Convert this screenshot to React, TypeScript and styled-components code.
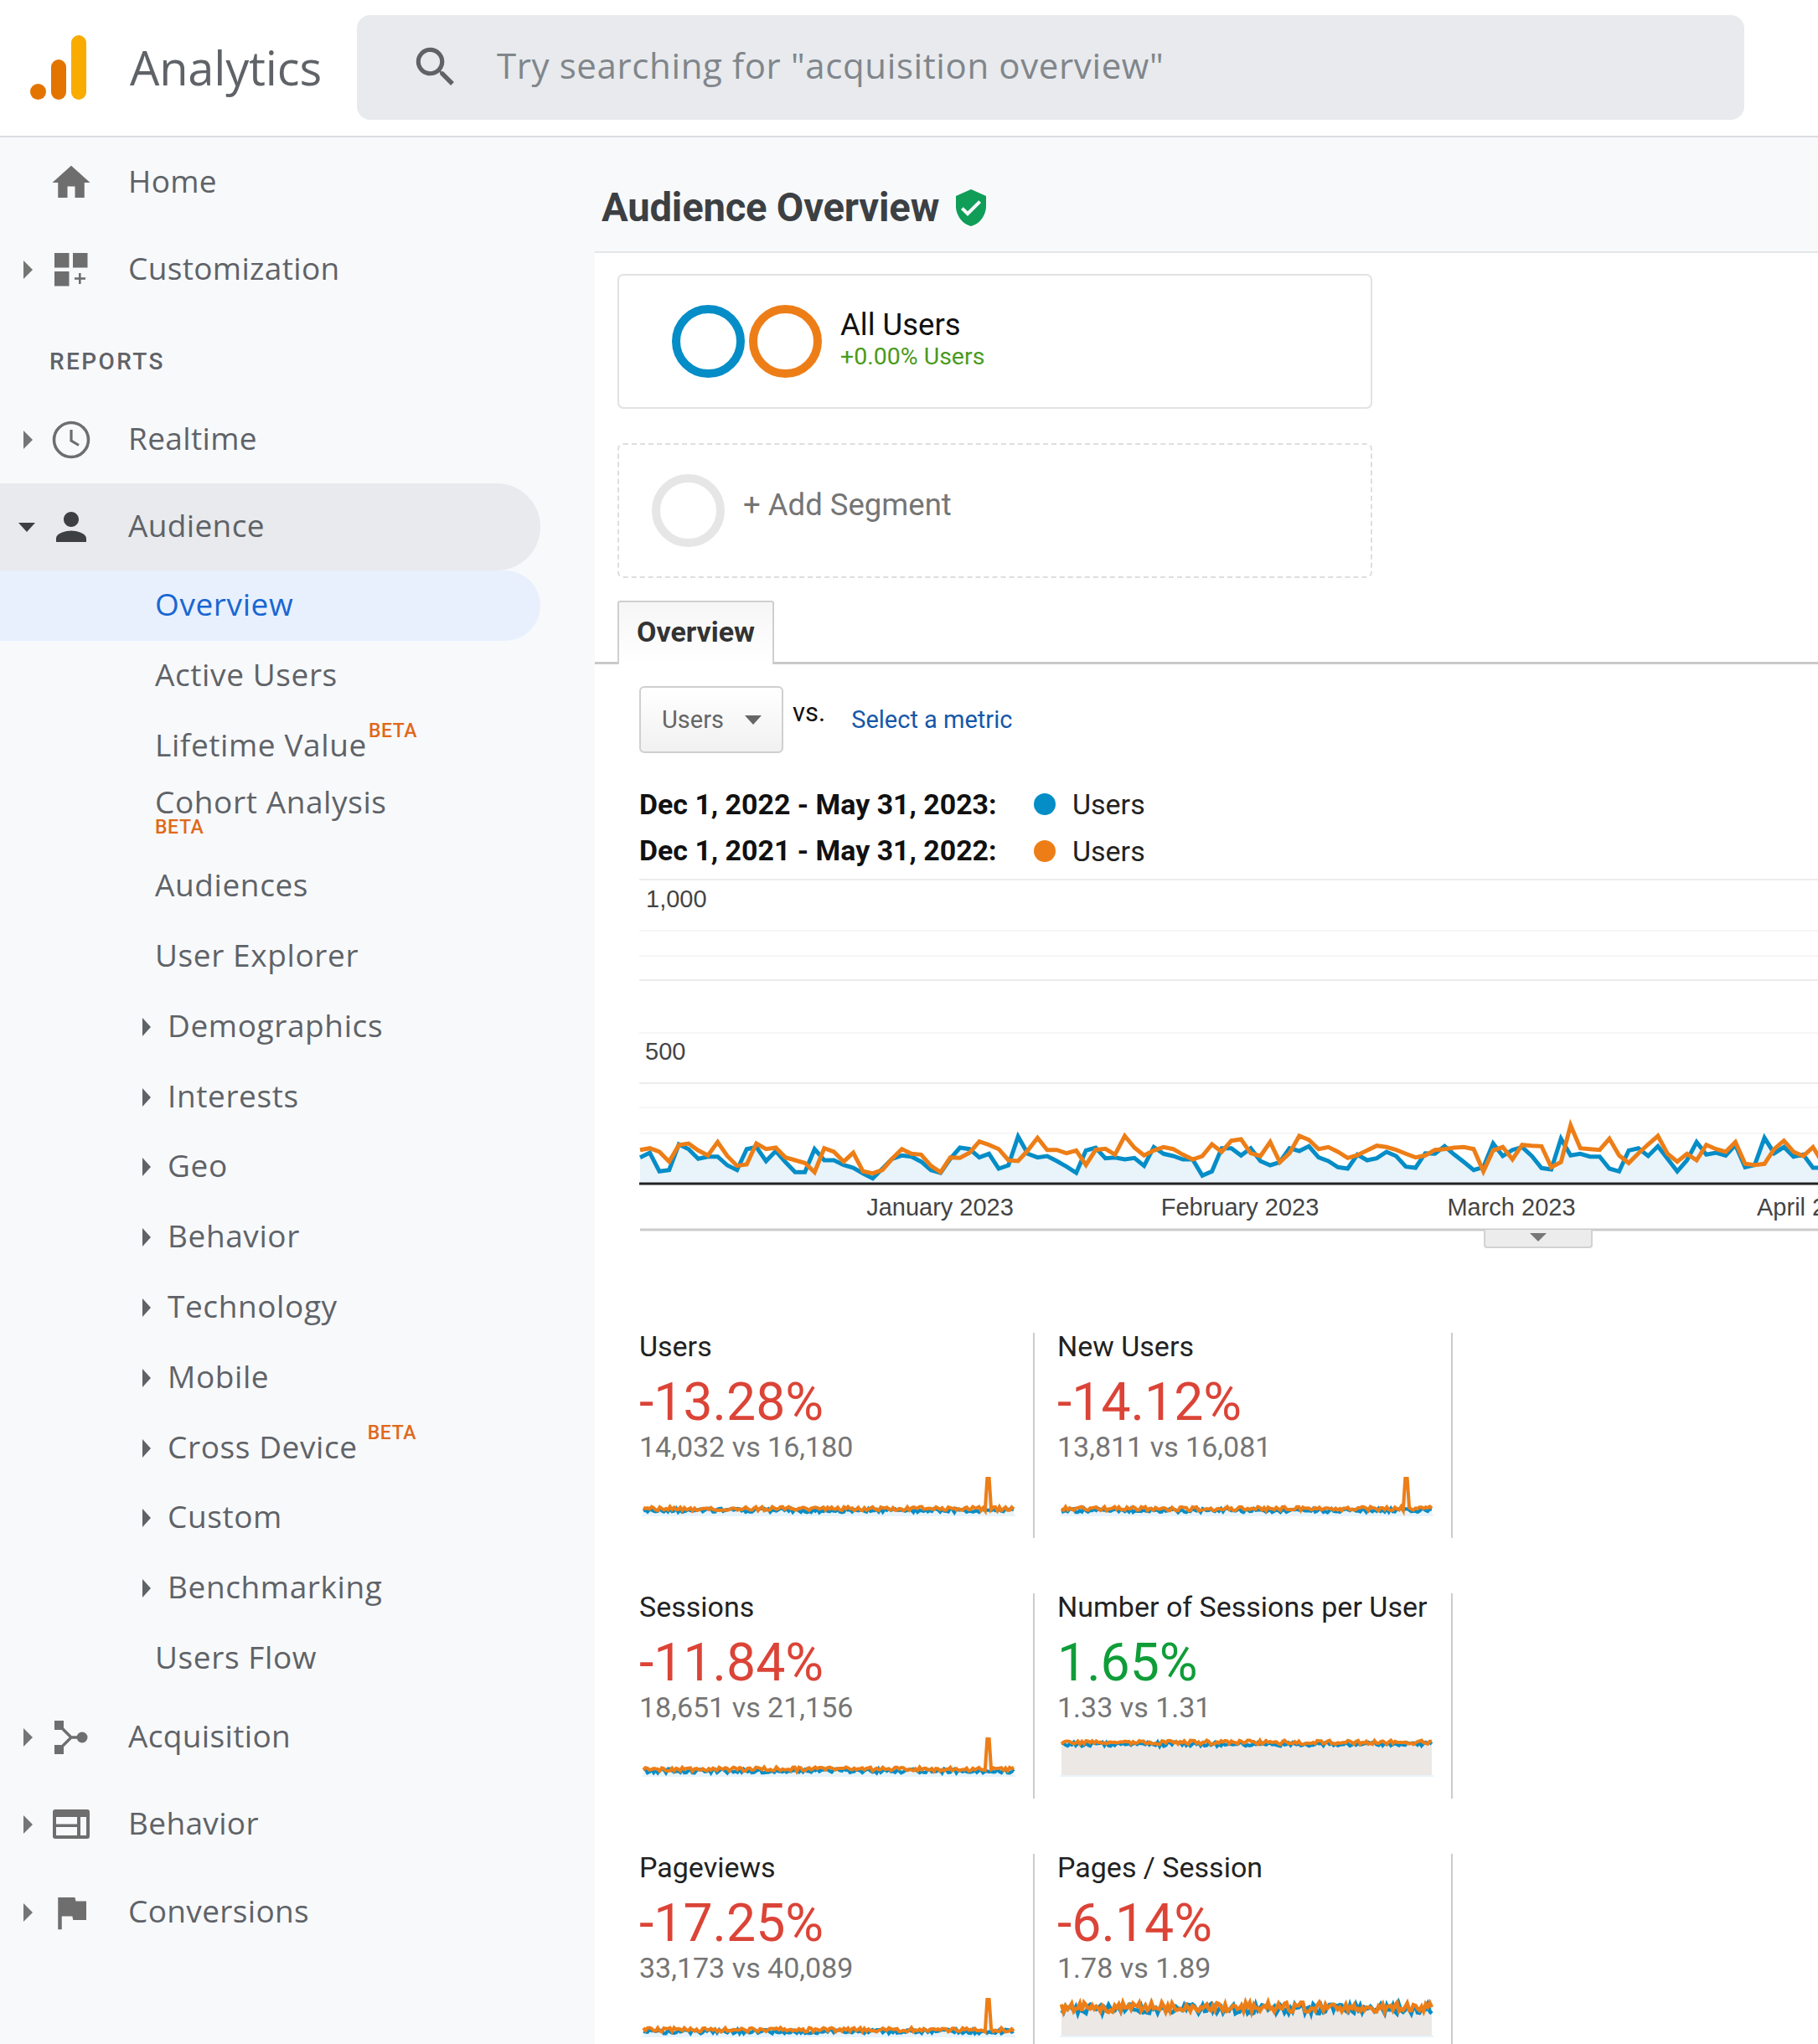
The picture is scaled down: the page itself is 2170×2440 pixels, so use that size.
import React from 'react';
import styled, { createGlobalStyle } from 'styled-components';

const NAV_FONT = '"Open Sans", "Noto Sans", sans-serif';
const BODY_FONT = 'Roboto, "Liberation Sans", sans-serif';

const GlobalStyle = createGlobalStyle`
  html, body {
    margin: 0;
    padding: 0;
    background: #fff;
  }
  * {
    box-sizing: border-box;
  }
`;

const Page = styled.div`
  width: 2170px;
  height: 2440px;
  overflow: hidden;
  display: flex;
  flex-direction: column;
  font-family: ${BODY_FONT};
`;

const Header = styled.header`
  height: 164px;
  flex: none;
  display: flex;
  align-items: center;
  background: #fff;
  border-bottom: 2px solid #dadce0;
  padding-left: 36px;
`;

const LogoMark = styled.svg`
  width: 68px;
  height: 78px;
  flex: none;
`;

const Brand = styled.div`
  margin-left: 51px;
  width: 271px;
  flex: none;
  font-family: ${NAV_FONT};
  font-size: 56px;
  letter-spacing: -0.2px;
  color: #5f6368;
  position: relative;
  top: -1px;
`;

const SearchBar = styled.div`
  width: 1656px;
  height: 125px;
  flex: none;
  margin-top: -2px;
  display: flex;
  align-items: center;
  padding-left: 63px;
  background: #e8eaed;
  border-radius: 16px;
`;

const SearchIcon = styled.svg`
  width: 62px;
  height: 62px;
  flex: none;
  fill: #5f6368;
`;

const Placeholder = styled.span`
  margin-left: 42px;
  padding-bottom: 6px;
  font-family: ${NAV_FONT};
  font-size: 42px;
  letter-spacing: 0.62px;
  color: #80868b;
`;

const Body = styled.div`
  flex: 1;
  display: flex;
  min-height: 0;
`;

const Sidebar = styled.nav`
  width: 710px;
  flex: none;
  padding-top: 2px;
  background: #f8f9fb;
  font-family: ${NAV_FONT};
  color: #5f6368;
`;

const TopRow = styled.div<{ $active?: boolean }>`
  height: 104.3px;
  width: 645px;
  display: flex;
  align-items: center;
  position: relative;
  padding: 0 0 5px 153px;
  font-size: 37px;
  font-weight: 500;
  letter-spacing: 0.35px;
  background: ${({ $active }) => ($active ? '#e8eaed' : 'transparent')};
  border-radius: 0 52px 52px 0;
`;

const TopCaret = styled.span<{ $open?: boolean }>`
  position: absolute;
  left: ${({ $open }) => ($open ? '22px' : '28px')};
  top: 50%;
  width: 0;
  height: 0;
  ${({ $open }) =>
    $open
      ? `
    margin-top: -5px;
    border-left: 10.5px solid transparent;
    border-right: 10.5px solid transparent;
    border-top: 11px solid #3c4043;
  `
      : `
    margin-top: -11px;
    border-top: 11px solid transparent;
    border-bottom: 11px solid transparent;
    border-left: 11px solid #757575;
  `}
`;

const IconSlot = styled.span`
  position: absolute;
  left: 58px;
  top: 50%;
  width: 54px;
  height: 54px;
  margin-top: -27px;
`;

const NavIcon = styled.svg<{ $dark?: boolean }>`
  display: block;
  width: 54px;
  height: 54px;
  fill: ${({ $dark }) => ($dark ? '#3c4043' : '#6e6e6e')};
`;

const SectionLabel = styled.div`
  height: 98px;
  padding: 42px 0 0 59px;
  font-family: ${BODY_FONT};
  font-size: 28px;
  line-height: 30px;
  letter-spacing: 2.4px;
  font-weight: 500;
  color: #5f6368;
`;

const SubRow = styled.div<{ $active?: boolean; $indented?: boolean }>`
  height: 83.8px;
  width: 645px;
  position: relative;
  display: flex;
  align-items: center;
  padding: 0 0 5px ${({ $indented }) => ($indented ? '200px' : '185px')};
  font-size: 37px;
  font-weight: 500;
  letter-spacing: 0.6px;
  color: ${({ $active }) => ($active ? '#1967d2' : '#5f6368')};
  background: ${({ $active }) => ($active ? '#e8f0fe' : 'transparent')};
  border-radius: 0 42px 42px 0;
`;

const SubCaret = styled.span`
  position: absolute;
  left: 170px;
  top: 50%;
  margin-top: -11px;
  width: 0;
  height: 0;
  border-top: 11px solid transparent;
  border-bottom: 11px solid transparent;
  border-left: 10px solid #5f6368;
`;

const Beta = styled.span`
  font-family: ${BODY_FONT};
  font-size: 23px;
  font-weight: 500;
  letter-spacing: 0.6px;
  color: #e0691a;
`;

const SuperBeta = styled(Beta)<{ $gap: number }>`
  margin-left: ${({ $gap }) => $gap}px;
  align-self: flex-start;
  margin-top: 10px;
`;

const StackedLabel = styled.div`
  display: flex;
  flex-direction: column;
  margin-top: -8px;
  line-height: 36px;
  ${Beta} {
    line-height: 18px;
    margin-top: 4px;
  }
`;

const Main = styled.main`
  flex: 1;
  min-width: 0;
  display: flex;
  flex-direction: column;
  overflow: hidden;
  background: #fff;
`;

const TitleBand = styled.div`
  height: 138px;
  flex: none;
  display: flex;
  align-items: center;
  margin-left: -2px;
  padding: 32px 0 0 10px;
  background: #f8f9fb;
  border-bottom: 2px solid #e6e6e6;
`;

const Title = styled.h1`
  margin: 0;
  font-size: 47.2px;
  font-weight: 700;
  letter-spacing: -0.2px;
  color: #3c4043;
`;

const ShieldIcon = styled.svg`
  width: 48px;
  height: 48px;
  margin-left: 14px;
  fill: #0f9d58;
`;

const Content = styled.div`
  flex: 1;
  min-height: 0;
  margin-left: -2px;
  border-left: 2px solid #eff0f2;
`;

const SegmentList = styled.div`
  display: flex;
  flex-direction: column;
  gap: 41px;
  padding: 25px 0 0 27px;
`;

const SegmentCard = styled.div<{ $dashed?: boolean }>`
  width: 901px;
  height: 161px;
  display: flex;
  align-items: center;
  border: 2px ${({ $dashed }) => ($dashed ? 'dashed #dedede' : 'solid #e2e2e2')};
  border-radius: 7px;
  padding-left: ${({ $dashed }) => ($dashed ? '39px' : '63px')};
`;

const Ring = styled.span<{ $color: string }>`
  display: block;
  width: 87px;
  height: 87px;
  margin-right: 5px;
  flex: none;
  border: 10px solid ${({ $color }) => $color};
  border-radius: 50%;
`;

const SegmentText = styled.div`
  margin-left: 17px;
  margin-top: -5px;
`;

const SegmentName = styled.div`
  font-size: 36.5px;
  line-height: 42px;
  color: #111;
`;

const SegmentDelta = styled.div`
  font-size: 28.5px;
  line-height: 34px;
  color: #4a9a1a;
`;

const AddLabel = styled.div`
  margin: -14px 0 0 17px;
  font-size: 36.5px;
  color: #757575;
`;

const TabStrip = styled.div`
  height: 76px;
  margin-top: 27px;
  padding-left: 27px;
  border-bottom: 3px solid #c9c9c9;
`;

const Tab = styled.div`
  width: 187px;
  height: 76px;
  display: flex;
  align-items: center;
  justify-content: center;
  padding-bottom: 4px;
  font-size: 34px;
  font-weight: 700;
  color: #333;
  background: linear-gradient(#f6f6f6, #fff);
  border: 2px solid #cfcfcf;
  border-bottom: none;
  border-radius: 3px 3px 0 0;
`;

const MetricPicker = styled.div`
  display: flex;
  align-items: flex-start;
  padding: 26px 0 0 53px;
`;

const DropButton = styled.div`
  width: 172px;
  height: 80px;
  display: flex;
  align-items: center;
  padding-left: 25px;
  font-size: 29px;
  color: #666;
  background: linear-gradient(#fff, #f1f1f1);
  border: 2px solid #cfcfcf;
  border-radius: 6px;
`;

const DropCaret = styled.span`
  margin-left: 25px;
  width: 0;
  height: 0;
  border-left: 10px solid transparent;
  border-right: 10px solid transparent;
  border-top: 11px solid #666;
`;

const Versus = styled.span`
  margin: 14px 0 0 11px;
  font-size: 31px;
  line-height: 36px;
  color: #111;
`;

const MetricLink = styled.a`
  margin: 22px 0 0 31px;
  font-size: 29px;
  line-height: 36px;
  color: #1558a8;
`;

const Legend = styled.div`
  display: grid;
  grid-template-columns: 471px 46px auto;
  justify-content: start;
  align-items: center;
  grid-auto-rows: 55.5px;
  margin: 33.5px 0 0 53px;
  font-size: 34px;
  color: #222;
`;

const LegendRange = styled.span`
  font-weight: 700;
  color: #111;
  font-size: 33.9px;
`;

const LegendDot = styled.span<{ $color: string }>`
  width: 26px;
  height: 26px;
  border-radius: 50%;
  background: ${({ $color }) => $color};
`;

const ChartWrap = styled.div`
  position: relative;
  margin: 0.5px 0 0 53px;
  height: 446px;
`;

const ChartSvg = styled.svg`
  display: block;
  width: 1407px;
  height: 446px;
  overflow: hidden;
  text {
    font-family: "Liberation Sans", Arial, sans-serif;
    font-size: 29px;
    fill: #444;
  }
`;

const CollapseTab = styled.div`
  position: absolute;
  left: 1008px;
  top: 424px;
  width: 130px;
  height: 22px;
  display: flex;
  justify-content: center;
  padding-top: 4px;
  background: #ececec;
  border: 2px solid #d2d2d2;
  border-top: none;
  border-radius: 0 0 4px 4px;
`;

const CollapseCaret = styled.span`
  width: 0;
  height: 0;
  border-left: 10px solid transparent;
  border-right: 10px solid transparent;
  border-top: 10px solid #777;
`;

const MetricGrid = styled.div`
  display: grid;
  grid-template-columns: repeat(2, 499px);
  grid-auto-rows: 245px;
  row-gap: 66px;
  margin: 101px 0 0 53px;
`;

const MetricCard = styled.div`
  width: 472px;
  height: 245px;
  border-right: 2px solid #cccccc;
`;

const MetricName = styled.div`
  margin-top: -2px;
  font-size: 34px;
  line-height: 36px;
  color: #222;
`;

const MetricDelta = styled.div<{ $up?: boolean }>`
  margin-top: 14px;
  font-size: 62.5px;
  line-height: 69px;
  color: ${({ $up }) => ($up ? '#0f9d38' : '#db4437')};
`;

const MetricCompare = styled.div`
  font-size: 34px;
  line-height: 38px;
  color: #757575;
`;

const SparkSvg = styled.svg`
  display: block;
  width: 472px;
  height: 62px;
  margin-top: 5px;
`;

// traced from the reference, 3x pixels above y=1330
const BLUE = [
  155, 138, 205, 200, 108, 125, 160, 152, 152, 183, 200, 125, 118, 168, 132, 172, 208, 208, 125, 165, 165,
  182, 192, 212, 230, 195, 160, 148, 152, 170, 200, 210, 160, 120, 125, 155, 142, 195, 183, 80, 142, 155,
  150, 168, 188, 210, 130, 120, 158, 155, 162, 157, 185, 118, 142, 150, 162, 162, 220, 205, 122, 122, 148,
  122, 168, 183, 172, 122, 132, 115, 155, 168, 190, 195, 145, 165, 158, 135, 150, 188, 192,
  140, 142, 115, 145, 172, 200, 190, 105, 150, 128, 118, 150, 193, 198, 88, 148, 142, 152, 152, 195, 205,
  130, 122, 150, 115, 160, 205, 165, 100, 145, 138, 148, 110, 190, 182, 85, 140, 118, 152, 145, 192, 192,
];

const ORANGE = [
  128, 122, 135, 170, 110, 105, 130, 148, 100, 150, 185, 180, 105, 125, 120, 155, 165, 175, 208, 122, 135,
  170, 138, 205, 212, 200, 160, 125, 142, 145, 185, 208, 155, 157, 138, 98, 110, 125, 165, 168, 130, 85,
  128, 128, 140, 130, 182, 128, 124, 145, 78, 120, 148, 130, 118, 125, 145, 162, 150, 108, 135, 95, 90,
  140, 150, 100, 172, 140, 78, 92, 125, 118, 135, 157, 147, 130, 113, 118, 128, 142, 155,
  148, 128, 125, 120, 118, 125, 205, 130, 118, 162, 110, 113, 115, 190, 172, 40, 122, 125, 128, 88, 148,
  175, 140, 108, 78, 142, 170, 142, 165, 110, 125, 135, 100, 178, 182, 178, 125, 95, 135, 150, 118, 175,
];

const CHART_TOP = 1044;
const POINT_STEP = 11.57;

const seriesPoints = (values: number[]) =>
  values.map((v, i) => `${(1 + i * POINT_STEP).toFixed(1)},${(1330 - CHART_TOP + v / 3).toFixed(1)}`).join(' ');

const GRID_LINES = [
  { y: 1050, color: '#ececec' },
  { y: 1111, color: '#f6f6f6' },
  { y: 1141, color: '#f6f6f6' },
  { y: 1170, color: '#ececec' },
  { y: 1233, color: '#f6f6f6' },
  { y: 1293, color: '#ececec' },
  { y: 1322, color: '#f6f6f6' },
  { y: 1353, color: '#f6f6f6' },
];

const MainChart = () => (
  <ChartWrap>
    <ChartSvg viewBox="0 0 1407 446">
      {GRID_LINES.map((line) => (
        <line key={line.y} x1="0" x2="1407" y1={line.y - CHART_TOP} y2={line.y - CHART_TOP} stroke={line.color} strokeWidth="2" />
      ))}
      <polygon points={`1,368 ${seriesPoints(BLUE)} 1420,368`} fill="#e8f3fa" />
      <polyline points={seriesPoints(BLUE)} fill="none" stroke="#058dc7" strokeWidth="5" strokeLinejoin="miter" />
      <polyline points={seriesPoints(ORANGE)} fill="none" stroke="#ed7e17" strokeWidth="5" strokeLinejoin="miter" />
      <line x1="0" x2="1407" y1="369" y2="369" stroke="#222" strokeWidth="3" />
      <line x1="1" x2="1407" y1="424" y2="424" stroke="#cbcbcb" strokeWidth="3" />
      <text x="8" y="39">1,000</text>
      <text x="7" y="221">500</text>
      <text x="359" y="407" textAnchor="middle">January 2023</text>
      <text x="717" y="407" textAnchor="middle">February 2023</text>
      <text x="1041" y="407" textAnchor="middle">March 2023</text>
      <text x="1334" y="407">April 2023</text>
    </ChartSvg>
    <CollapseTab>
      <CollapseCaret />
    </CollapseTab>
  </ChartWrap>
);

const noise = (seed: number, count: number, amp: number) => {
  let state = seed;
  return Array.from({ length: count }, () => {
    state = (state * 1103515245 + 12345) % 2147483648;
    return ((state / 2147483648) * 2 - 1) * amp;
  });
};

type SparkProps = {
  seed: number;
  line: number;
  amp: number;
  fill: string;
  spike?: boolean;
  width?: number;
};

const SPARK_LEFT = 5;
const SPARK_WIDTH = 442;
const SPARK_COUNT = 182;
const SPARK_BASE = 58;

const Sparkline = ({ seed, line, amp, fill, spike, width = 4 }: SparkProps) => {
  const build = (s: number, shift: number, withSpike: boolean) =>
    noise(s, SPARK_COUNT, amp).map((n, i) => {
      const x = SPARK_LEFT + (i * SPARK_WIDTH) / (SPARK_COUNT - 1);
      const y = withSpike && (i === 168 || i === 169) ? 14 : line + n + shift;
      return `${x.toFixed(1)},${y.toFixed(1)}`;
    });
  const blue = build(seed, 2, false);
  const orange = build(seed + 77, 0, !!spike);
  return (
    <SparkSvg viewBox="0 0 472 62">
      <polygon
        points={`${SPARK_LEFT},${SPARK_BASE} ${orange.join(' ')} ${SPARK_LEFT + SPARK_WIDTH},${SPARK_BASE}`}
        fill={fill}
      />
      <line x1={SPARK_LEFT - 2} x2={SPARK_LEFT + SPARK_WIDTH + 2} y1={SPARK_BASE} y2={SPARK_BASE} stroke="#e8f3fa" strokeWidth="2" />
      <polyline points={blue.join(' ')} fill="none" stroke="#058dc7" strokeWidth={width} />
      <polyline points={orange.join(' ')} fill="none" stroke="#ed7e17" strokeWidth={width} />
    </SparkSvg>
  );
};

const BLUE_TINT = '#e9f3fa';
const GREY_TINT = '#ece8e6';

const METRICS = [
  { name: 'Users', delta: '-13.28%', compare: '14,032 vs 16,180', spark: { seed: 11, line: 50, amp: 2.5, fill: BLUE_TINT, spike: true } },
  { name: 'New Users', delta: '-14.12%', compare: '13,811 vs 16,081', spark: { seed: 29, line: 50, amp: 2.5, fill: BLUE_TINT, spike: true } },
  { name: 'Sessions', delta: '-11.84%', compare: '18,651 vs 21,156', spark: { seed: 43, line: 50, amp: 2.5, fill: BLUE_TINT, spike: true } },
  { name: 'Number of Sessions per User', delta: '1.65%', up: true, compare: '1.33 vs 1.31', spark: { seed: 57, line: 18, amp: 2.5, fill: GREY_TINT } },
  { name: 'Pageviews', delta: '-17.25%', compare: '33,173 vs 40,089', spark: { seed: 71, line: 50, amp: 2.5, fill: BLUE_TINT, spike: true } },
  { name: 'Pages / Session', delta: '-6.14%', compare: '1.78 vs 1.89', spark: { seed: 83, line: 23, amp: 6, fill: GREY_TINT, width: 4.5 } },
];

const HomeIcon = () => (
  <NavIcon viewBox="0 0 24 24">
    <path d="M10 20v-6h4v6h5v-8h3L12 3 2 12h3v8z" />
  </NavIcon>
);

const GridPlusIcon = () => (
  <NavIcon viewBox="0 0 54 54">
    <rect x="7" y="7" width="17.5" height="17.5" />
    <rect x="29" y="7" width="17.5" height="17.5" />
    <rect x="7" y="29" width="17.5" height="17.5" />
    <rect x="36" y="31" width="2.6" height="13" />
    <rect x="31" y="36.2" width="13" height="2.6" />
  </NavIcon>
);

const ClockIcon = () => (
  <NavIcon viewBox="0 0 54 54">
    <circle cx="27" cy="27" r="20.5" fill="none" stroke="#6e6e6e" strokeWidth="3.6" />
    <path d="M27 15v13l9 5.5" fill="none" stroke="#6e6e6e" strokeWidth="3.2" />
  </NavIcon>
);

const PersonIcon = () => (
  <NavIcon $dark viewBox="0 0 24 24">
    <path d="M12 12c2.21 0 4-1.79 4-4s-1.79-4-4-4-4 1.79-4 4 1.79 4 4 4zm0 2c-2.67 0-8 1.34-8 4v2h16v-2c0-2.66-5.33-4-8-4z" />
  </NavIcon>
);

const BranchIcon = () => (
  <NavIcon viewBox="0 0 54 54">
    <rect x="7" y="7" width="11" height="11" />
    <rect x="7" y="36" width="11" height="11" />
    <circle cx="40" cy="27" r="6.5" />
    <path d="M13 13l14 14L13 41M27 27h13" fill="none" stroke="#6e6e6e" strokeWidth="3.4" />
  </NavIcon>
);

const LayoutIcon = () => (
  <NavIcon viewBox="0 0 54 54">
    <path
      fillRule="evenodd"
      d="M8 9h38a3 3 0 0 1 3 3v29a3 3 0 0 1-3 3H8a3 3 0 0 1-3-3V12a3 3 0 0 1 3-3zm1 9v8.5h25V18zm29 0v22h7V18zM9 30v10h25V30z"
    />
  </NavIcon>
);

const FlagIcon = () => (
  <NavIcon viewBox="0 0 24 24">
    <path d="M14.4 6L14 4H5v17h2v-7h5.6l.4 2h7V6z" />
  </NavIcon>
);

type SubItem = {
  label: string;
  active?: boolean;
  caret?: boolean;
  beta?: number;
  stackedBeta?: boolean;
};

const SUB_ITEMS: SubItem[] = [
  { label: 'Overview', active: true },
  { label: 'Active Users' },
  { label: 'Lifetime Value', beta: 2 },
  { label: 'Cohort Analysis', stackedBeta: true },
  { label: 'Audiences' },
  { label: 'User Explorer' },
  { label: 'Demographics', caret: true },
  { label: 'Interests', caret: true },
  { label: 'Geo', caret: true },
  { label: 'Behavior', caret: true },
  { label: 'Technology', caret: true },
  { label: 'Mobile', caret: true },
  { label: 'Cross Device', caret: true, beta: 12 },
  { label: 'Custom', caret: true },
  { label: 'Benchmarking', caret: true },
  { label: 'Users Flow' },
];

const NavRow = ({ label, icon, caret, open, active }: {
  label: string;
  icon: React.ReactNode;
  caret?: boolean;
  open?: boolean;
  active?: boolean;
}) => (
  <TopRow $active={active}>
    {caret && <TopCaret $open={open} />}
    <IconSlot>{icon}</IconSlot>
    {label}
  </TopRow>
);

const App = () => (
  <Page>
    <GlobalStyle />
    <Header>
      <LogoMark viewBox="0 0 68 78">
        <rect x="49" y="0" width="18" height="77" rx="9" fill="#f9ab00" />
        <rect x="25" y="29" width="18" height="48" rx="9" fill="#e37400" />
        <circle cx="9.5" cy="67.5" r="9.5" fill="#e37400" />
      </LogoMark>
      <Brand>Analytics</Brand>
      <SearchBar>
        <SearchIcon viewBox="0 0 24 24">
          <path d="M15.5 14h-.79l-.28-.27A6.471 6.471 0 0 0 16 9.5 6.5 6.5 0 1 0 9.5 16c1.61 0 3.09-.59 4.23-1.57l.27.28v.79l5 4.99L20.49 19l-4.99-5zm-6 0C7.01 14 5 11.99 5 9.5S7.01 5 9.5 5 14 7.01 14 9.5 11.99 14 9.5 14z" />
        </SearchIcon>
        <Placeholder>Try searching for "acquisition overview"</Placeholder>
      </SearchBar>
    </Header>
    <Body>
      <Sidebar>
        <NavRow label="Home" icon={<HomeIcon />} />
        <NavRow label="Customization" icon={<GridPlusIcon />} caret />
        <SectionLabel>REPORTS</SectionLabel>
        <NavRow label="Realtime" icon={<ClockIcon />} caret />
        <NavRow label="Audience" icon={<PersonIcon />} caret open active />
        {SUB_ITEMS.map((item) => (
          <SubRow key={item.label} $active={item.active} $indented={item.caret}>
            {item.caret && <SubCaret />}
            {item.stackedBeta ? (
              <StackedLabel>
                {item.label}
                <Beta>BETA</Beta>
              </StackedLabel>
            ) : (
              item.label
            )}
            {item.beta !== undefined && <SuperBeta $gap={item.beta}>BETA</SuperBeta>}
          </SubRow>
        ))}
        <NavRow label="Acquisition" icon={<BranchIcon />} caret />
        <NavRow label="Behavior" icon={<LayoutIcon />} caret />
        <NavRow label="Conversions" icon={<FlagIcon />} caret />
      </Sidebar>
      <Main>
        <TitleBand>
          <Title>Audience Overview</Title>
          <ShieldIcon viewBox="0 0 24 24">
            <path d="M12 1L3 5v6c0 5.55 3.84 10.74 9 12 5.16-1.26 9-6.45 9-12V5l-9-4zm-2 16l-4-4 1.41-1.41L10 14.17l6.59-6.59L18 9l-8 8z" />
          </ShieldIcon>
        </TitleBand>
        <Content>
          <SegmentList>
            <SegmentCard>
              <Ring $color="#058dc7" />
              <Ring $color="#ed7e17" />
              <SegmentText>
                <SegmentName>All Users</SegmentName>
                <SegmentDelta>+0.00% Users</SegmentDelta>
              </SegmentText>
            </SegmentCard>
            <SegmentCard $dashed>
              <Ring $color="#e6e6e6" />
              <AddLabel>+ Add Segment</AddLabel>
            </SegmentCard>
          </SegmentList>
          <TabStrip>
            <Tab>Overview</Tab>
          </TabStrip>
          <MetricPicker>
            <DropButton>
              Users
              <DropCaret />
            </DropButton>
            <Versus>vs.</Versus>
            <MetricLink>Select a metric</MetricLink>
          </MetricPicker>
          <Legend>
            <LegendRange>Dec 1, 2022 - May 31, 2023:</LegendRange>
            <LegendDot $color="#058dc7" />
            <span>Users</span>
            <LegendRange>Dec 1, 2021 - May 31, 2022:</LegendRange>
            <LegendDot $color="#ed7e17" />
            <span>Users</span>
          </Legend>
          <MainChart />
          <MetricGrid>
            {METRICS.map((metric) => (
              <MetricCard key={metric.name}>
                <MetricName>{metric.name}</MetricName>
                <MetricDelta $up={metric.up}>{metric.delta}</MetricDelta>
                <MetricCompare>{metric.compare}</MetricCompare>
                <Sparkline {...metric.spark} />
              </MetricCard>
            ))}
          </MetricGrid>
        </Content>
      </Main>
    </Body>
  </Page>
);

export default App;
